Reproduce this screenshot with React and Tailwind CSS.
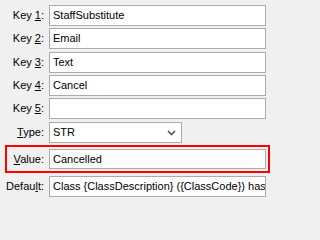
import React from 'react';

const font = { fontFamily: '"Liberation Sans", Arial, sans-serif' };

function Label({ pre, acc, post, className = 'w-[44px]' }) {
  return (
    <div className={`${className} shrink-0 text-right whitespace-nowrap`}>
      {pre}
      <span className="underline underline-offset-[1px]">{acc}</span>
      {post}:
    </div>
  );
}

function Box({ children, className = 'w-[217px]' }) {
  return (
    <div className={`${className} ml-[5px] h-[21px] border border-[#ababab] bg-white pl-[3px] flex items-center overflow-hidden whitespace-nowrap`}>
      {children}
    </div>
  );
}

const keys = [
  { n: '1', v: 'StaffSubstitute', mt: 'mt-[5px]' },
  { n: '2', v: 'Email', mt: 'mt-[2px]' },
  { n: '3', v: 'Text', mt: 'mt-[3px]' },
  { n: '4', v: 'Cancel', mt: 'mt-[2px]' },
  { n: '5', v: '', mt: 'mt-[2px]' },
];

export default function App() {
  return (
    <div className="w-full min-h-screen bg-[#f0f0f0]">
      <div className="w-[271px] h-[202px] text-[11px] text-black overflow-hidden flex flex-col" style={font}>
        {keys.map((k) => (
          <div key={k.n} className={`flex items-center ${k.mt}`}>
            <Label pre="Key " acc={k.n} post="" />
            <Box>{k.v}</Box>
          </div>
        ))}

        {/* Type */}
        <div className="flex items-center mt-[3px]">
          <Label pre="" acc="T" post="ype" />
          <div className="w-[133px] ml-[5px] h-[21px] border border-[#ababab] bg-white pl-[3px] pr-[4px] flex items-center justify-between">
            <span>STR</span>
            <svg width="9" height="6" viewBox="0 0 9 6" className="mr-[1px]">
              <path d="M1 1 L4.5 4.5 L8 1" fill="none" stroke="#555" strokeWidth="1.6" />
            </svg>
          </div>
        </div>

        {/* Value, highlighted */}
        <div className="ml-[5px] mt-[2px] w-[265px] border-2 border-[#ff0000] p-[2px] pl-0 flex items-center">
          <Label pre="" acc="V" post="alue" className="w-[37px]" />
          <Box className="w-[217px] !h-[20px]">Cancelled</Box>
        </div>

        {/* Default */}
        <div className="flex items-center mt-[3px]">
          <Label pre="Defau" acc="l" post="t" />
          <Box>Class {'{ClassDescription}'} ({'{ClassCode}'}) has b</Box>
        </div>
      </div>
    </div>
  );
}
